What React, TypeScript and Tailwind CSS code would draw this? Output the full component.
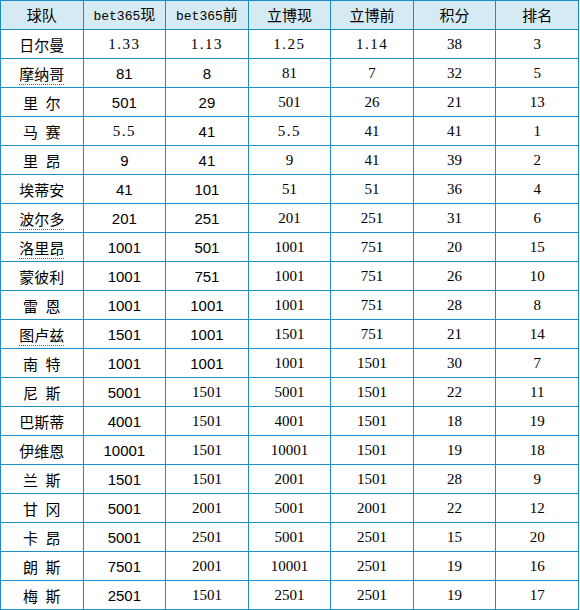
import React from "react";

type Row = {
  team: string;
  vals: string[];
  dotted?: boolean;
};

const rows: Row[] = [
  { team: "日尔曼", vals: ["1.33", "1.13", "1.25", "1.14", "38", "3"] },
  { team: "摩纳哥", vals: ["81", "8", "81", "7", "32", "5"], dotted: true },
  { team: "里\u2002尔", vals: ["501", "29", "501", "26", "21", "13"] },
  { team: "马\u2002赛", vals: ["5.5", "41", "5.5", "41", "41", "1"] },
  { team: "里\u2002昂", vals: ["9", "41", "9", "41", "39", "2"] },
  { team: "埃蒂安", vals: ["41", "101", "51", "51", "36", "4"] },
  { team: "波尔多", vals: ["201", "251", "201", "251", "31", "6"], dotted: true },
  { team: "洛里昂", vals: ["1001", "501", "1001", "751", "20", "15"], dotted: true },
  { team: "蒙彼利", vals: ["1001", "751", "1001", "751", "26", "10"] },
  { team: "雷\u2002恩", vals: ["1001", "1001", "1001", "751", "28", "8"] },
  { team: "图卢兹", vals: ["1501", "1001", "1501", "751", "21", "14"], dotted: true },
  { team: "南\u2002特", vals: ["1001", "1001", "1001", "1501", "30", "7"] },
  { team: "尼\u2002斯", vals: ["5001", "1501", "5001", "1501", "22", "11"] },
  { team: "巴斯蒂", vals: ["4001", "1501", "4001", "1501", "18", "19"] },
  { team: "伊维恩", vals: ["10001", "1501", "10001", "1501", "19", "18"] },
  { team: "兰\u2002斯", vals: ["1501", "1501", "2001", "1501", "28", "9"] },
  { team: "甘\u2002冈", vals: ["5001", "2001", "5001", "2001", "22", "12"] },
  { team: "卡\u2002昂", vals: ["5001", "2501", "5001", "2501", "15", "20"] },
  { team: "朗\u2002斯", vals: ["7501", "2001", "10001", "2501", "19", "16"] },
  { team: "梅\u2002斯", vals: ["2501", "1501", "2501", "2501", "19", "17"] },
];

const cjk = "font-['Noto_Sans_CJK_SC',sans-serif]";

// pick the digit face per cell; the source mixes pasted styles
function numClass(val: string, col: number, row: number) {
  if (val.includes(".")) {
    return "font-['Liberation_Serif',serif] text-[15px] tracking-[1.5px]";
  }
  if (col === 0 || (col === 1 && row < 12)) {
    return "font-['Liberation_Sans',sans-serif] text-[15px]";
  }
  return "font-['Liberation_Serif',serif] text-[15px]";
}

function Head({ children }: { children: React.ReactNode }) {
  return (
    <th className="h-[29px] border border-[#1a8dc8] p-0 text-center font-normal">
      {children}
    </th>
  );
}

function BetHead({ suffix }: { suffix: string }) {
  return (
    <span className="inline-flex items-baseline">
      <span className="font-['Liberation_Mono',monospace] text-[13px]">bet365</span>
      <span className={`${cjk} text-[15px]`}>{suffix}</span>
    </span>
  );
}

export default function App() {
  return (
    <div className="h-[610px] w-[580px] bg-white text-black">
      <table className="w-[579px] table-fixed border-collapse">
        <thead>
          <tr className={`bg-[#d5eaf2] ${cjk} text-[15px]`}>
            <Head>球队</Head>
            <Head>
              <BetHead suffix="现" />
            </Head>
            <Head>
              <BetHead suffix="前" />
            </Head>
            <Head>立博现</Head>
            <Head>立博前</Head>
            <Head>积分</Head>
            <Head>排名</Head>
          </tr>
        </thead>
        <tbody>
          {rows.map((r, ri) => (
            <tr key={r.team} className="h-[29px]">
              <td className={`border border-[#1a8dc8] p-0 text-center ${cjk} text-[15px] leading-none`}>
                <span
                  className={
                    r.dotted
                      ? "underline decoration-dotted decoration-[#3b5bd6] decoration-1 underline-offset-[4px]"
                      : ""
                  }
                >
                  {r.team}
                </span>
              </td>
              {r.vals.map((v, ci) => (
                <td
                  key={ci}
                  className={`border border-[#1a8dc8] p-0 text-center leading-none ${numClass(v, ci, ri)}`}
                >
                  {v}
                </td>
              ))}
            </tr>
          ))}
        </tbody>
      </table>
    </div>
  );
}
